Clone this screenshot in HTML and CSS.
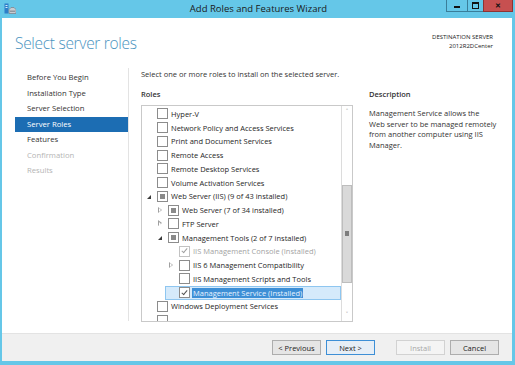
FILE: index.html
```html
<!DOCTYPE html>
<html lang="en">
<head>
  <meta charset="UTF-8" />
  <title>Add Roles and Features Wizard</title>
  <link rel="stylesheet" href="styles.css">
</head>
<body>

  <div class="window">
    <div class="titlebar">
      <svg class="app-icon" width="12" height="11" viewBox="0 0 12 11">
        <rect x="0.5" y="0.5" width="4" height="10" fill="#2f7fc8" />
        <rect x="1.5" y="2" width="2" height="1" fill="#d6ecfa" />
        <rect x="1.5" y="4" width="2" height="1" fill="#d6ecfa" />
        <path d="M5 6.5 L7 4.5 L10 4.5 L12 6.5 L12 10.5 L5 10.5 Z" fill="#c8ccd2" stroke="#7d8690" stroke-width="0.8" />
        <rect x="6" y="7.5" width="5" height="1.5" fill="#8e969e" />
      </svg>
      <div class="title">Add Roles and Features Wizard</div>
      <div class="win-btns">
        <div class="wbtn min"><span></span></div>
        <div class="wbtn max"><span></span></div>
        <div class="wbtn close">&#x2715;</div>
      </div>
    </div>

    <div class="content">
      <div class="header">
        <h1>Select server roles</h1>
        <div class="dest">
          <div class="dest-label">DESTINATION SERVER</div>
          <div>2012R2DCenter</div>
        </div>
      </div>

      <div class="body">
        <ul class="nav">
          <li>Before You Begin</li>
          <li>Installation Type</li>
          <li>Server Selection</li>
          <li class="active">Server Roles</li>
          <li>Features</li>
          <li class="disabled">Confirmation</li>
          <li class="disabled">Results</li>
        </ul>

        <div class="main">
          <p class="intro">Select one or more roles to install on the selected server.</p>
          <div class="columns">
            <div class="roles">
              <h3>Roles</h3>
              <div class="listbox">
                <div class="list">
                  <div class="row lv0"><span class="exp"></span><span class="cb"></span><span class="lbl">Hyper-V</span></div>
                  <div class="row lv0"><span class="exp"></span><span class="cb"></span><span class="lbl">Network Policy and Access Services</span></div>
                  <div class="row lv0"><span class="exp"></span><span class="cb"></span><span class="lbl">Print and Document Services</span></div>
                  <div class="row lv0"><span class="exp"></span><span class="cb"></span><span class="lbl">Remote Access</span></div>
                  <div class="row lv0"><span class="exp"></span><span class="cb"></span><span class="lbl">Remote Desktop Services</span></div>
                  <div class="row lv0"><span class="exp"></span><span class="cb"></span><span class="lbl">Volume Activation Services</span></div>
                  <div class="row lv0"><span class="exp open"></span><span class="cb partial"></span><span class="lbl">Web Server (IIS) (9 of 43 installed)</span></div>
                  <div class="row lv1"><span class="exp closed"></span><span class="cb partial"></span><span class="lbl">Web Server (7 of 34 installed)</span></div>
                  <div class="row lv1"><span class="exp closed"></span><span class="cb"></span><span class="lbl">FTP Server</span></div>
                  <div class="row lv1"><span class="exp open"></span><span class="cb partial"></span><span class="lbl">Management Tools (2 of 7 installed)</span></div>
                  <div class="row lv2 grey"><span class="exp"></span><span class="cb checked"></span><span class="lbl">IIS Management Console (Installed)</span></div>
                  <div class="row lv2"><span class="exp closed"></span><span class="cb"></span><span class="lbl">IIS 6 Management Compatibility</span></div>
                  <div class="row lv2"><span class="exp"></span><span class="cb"></span><span class="lbl">IIS Management Scripts and Tools</span></div>
                  <div class="row lv2 sel"><span class="exp"></span><span class="cb checked"></span><span class="lbl">Management Service (Installed)</span></div>
                  <div class="row lv0"><span class="exp"></span><span class="cb"></span><span class="lbl">Windows Deployment Services</span></div>
                  <div class="row lv0"><span class="exp"></span><span class="cb"></span></div>
                </div>
                <div class="scrollbar">
                  <div class="arrow">&#x2C4;</div>
                  <div class="track">
                    <div class="thumb"><span class="grip"></span></div>
                  </div>
                  <div class="arrow">&#x2C5;</div>
                </div>
              </div>
            </div>
            <div class="desc">
              <h3>Description</h3>
              <p>Management Service allows the Web server to be managed remotely from another computer using IIS Manager.</p>
            </div>
          </div>
        </div>
      </div>

      <div class="footer">
        <button class="btn">&lt; Previous</button>
        <button class="btn default">Next &gt;</button>
        <button class="btn off">Install</button>
        <button class="btn">Cancel</button>
      </div>
    </div>
  </div>

</body>
</html>
```

FILE: styles.css
```css
body {
  margin: 0;
  font-family: "Open Sans", "Noto Sans", sans-serif;
  color: #1e1e1e;
}

.window {
  width: 515px;
  height: 365px;
  box-sizing: border-box;
  background: #65c7e8;
  padding: 0 3px 4px 2px;
  display: flex;
  flex-direction: column;
}

/* Title bar */
.titlebar {
  height: 18px;
  display: flex;
  align-items: flex-start;
}
.app-icon {
  margin: 3px 0 0 2px;
}
.title {
  flex: 1;
  text-align: center;
  font-size: 9.5px;
  line-height: 17px;
  color: #1a1a1a;
  padding-left: 55px;
}
.win-btns {
  display: flex;
  margin-right: -1px;
}
.wbtn {
  height: 12px;
  box-sizing: border-box;
  border: 1px solid #3a7e9a;
  border-top: none;
  display: flex;
  align-items: center;
  justify-content: center;
}
.wbtn.min {
  width: 21px;
  border-right: none;
}
.wbtn.min span {
  width: 6px;
  height: 2px;
  background: #111;
  margin-top: 3px;
}
.wbtn.max {
  width: 16px;
  border-right: none;
}
.wbtn.max span {
  width: 5px;
  height: 4px;
  border: 1px solid #111;
  border-top-width: 2px;
}
.wbtn.close {
  width: 30px;
  background: #c75050;
  border-color: #8e3333;
  color: #111;
  font-size: 7px;
  font-weight: bold;
}

/* Content */
.content {
  flex: 1;
  background: #fff;
  display: flex;
  flex-direction: column;
}
.header {
  height: 50px;
  display: flex;
  justify-content: space-between;
  padding: 0 19px 0 13px;
}
.header h1 {
  margin: 14px 0 0;
  font-size: 15.5px;
  font-weight: 300;
  color: #4a93c0;
  letter-spacing: -0.3px;
}
.dest {
  margin-top: 15px;
  text-align: right;
  font-size: 6px;
  line-height: 9px;
  color: #222;
}

.body {
  flex: 1;
  display: flex;
}

.nav {
  list-style: none;
  margin: 0;
  padding: 2px 0 0 13px;
  width: 113px;
  border-right: 1px solid #e3e3e3;
  margin-bottom: 12px;
}
.nav li {
  height: 15.5px;
  line-height: 15.5px;
  padding-left: 12px;
  font-size: 7.7px;
  color: #333;
}
.nav li.active {
  background: #1c6db3;
  color: #fff;
}
.nav li.disabled {
  color: #b4b4b4;
}

.main {
  flex: 1;
  padding-left: 12px;
}
.intro {
  margin: 0;
  font-size: 7.5px;
  line-height: 12px;
  color: #333;
}
.columns {
  display: flex;
  margin-top: 9px;
}
.roles {
  width: 212px;
}
h3 {
  margin: 0 0 5px;
  font-size: 7.5px;
  line-height: 11px;
  font-weight: 600;
  color: #333;
}

.listbox {
  height: 217px;
  box-sizing: border-box;
  border: 1px solid #c9c9c9;
  display: flex;
  overflow: hidden;
}
.list {
  flex: 1;
  padding-top: 1px;
}
.row {
  height: 13.75px;
  box-sizing: border-box;
  display: flex;
  align-items: center;
  font-size: 7.5px;
  color: #262626;
  white-space: nowrap;
}
.row.lv0 { margin-left: 4px; }
.row.lv1 { margin-left: 15px; }
.row.lv2 { margin-left: 26px; }
.row.grey { color: #a3a3a3; }
.row.sel {
  margin-left: 23px;
  padding-left: 2px;
  border: 1px solid #8ec6f0;
  background: #d5eafb;
}
.row.sel .lbl {
  background: #3d8fd6;
  color: #e8f3ff;
  padding: 0 1px;
  margin-left: -1px;
}

.exp {
  width: 11px;
  height: 9px;
  position: relative;
}
.exp.closed::before {
  content: "";
  position: absolute;
  left: 1px;
  top: 1px;
  border-left: 4px solid #a0a0a0;
  border-top: 3.5px solid transparent;
  border-bottom: 3.5px solid transparent;
}
.exp.closed::after {
  content: "";
  position: absolute;
  left: 2px;
  top: 2.5px;
  border-left: 2px solid #fff;
  border-top: 2px solid transparent;
  border-bottom: 2px solid transparent;
}
.exp.open::before {
  content: "";
  position: absolute;
  left: 1px;
  top: 3px;
  border-right: 4px solid #3a3a3a;
  border-top: 4px solid transparent;
}

.cb {
  width: 9px;
  height: 9px;
  border: 1px solid #8c8c8c;
  background: #fff;
  margin-right: 3px;
  position: relative;
  flex-shrink: 0;
}
.cb.partial::after {
  content: "";
  position: absolute;
  left: 2px;
  top: 2px;
  width: 5px;
  height: 5px;
  background: #8a8a8a;
}
.cb.checked::after {
  content: "";
  position: absolute;
  left: 3px;
  top: 0.5px;
  width: 2px;
  height: 5px;
  border-right: 1px solid #555;
  border-bottom: 1px solid #555;
  transform: rotate(40deg);
}
.row.grey .cb { border-color: #c2c2c2; }
.row.grey .cb.checked::after { border-color: #a0a0a0; }

.scrollbar {
  width: 10px;
  border-left: 1px solid #dcdcdc;
  display: flex;
  flex-direction: column;
}
.arrow {
  height: 12px;
  font-size: 7px;
  line-height: 12px;
  text-align: center;
  color: #777;
}
.track {
  flex: 1;
  display: flex;
  flex-direction: column;
  justify-content: center;
  padding-top: 57px;
  padding-bottom: 17px;
}
.thumb {
  height: 98px;
  box-sizing: border-box;
  background: #d9d9d9;
  border: 1px solid #bdbdbd;
  display: flex;
  align-items: center;
  justify-content: center;
}
.grip {
  width: 4px;
  height: 5px;
  background: #7d7d7d;
}

.desc {
  flex: 1;
  padding-left: 16px;
}
.desc h3 {
  margin-bottom: 8px;
}
.desc p {
  margin: 0;
  max-width: 128px;
  font-size: 7.5px;
  line-height: 10.7px;
  color: #333;
}

/* Footer */
.footer {
  height: 28px;
  box-sizing: border-box;
  background: #f0f0f0;
  border-top: 1px solid #e3e3e3;
  display: flex;
  align-items: center;
  justify-content: flex-end;
  padding-right: 13px;
  gap: 5px;
}
.btn {
  width: 49px;
  height: 15px;
  padding: 0;
  font-family: "Open Sans", "Noto Sans", sans-serif;
  font-size: 7.5px;
  color: #222;
  background: #e5e5e5;
  border: 1px solid #adadad;
  border-radius: 0;
}
.btn.default {
  border-color: #3d8fd6;
  background: #e6eef6;
}
.btn.off {
  margin-left: 16px;
  color: #a8a8a8;
  background: #f4f4f4;
  border-color: #d2d2d2;
}
```
